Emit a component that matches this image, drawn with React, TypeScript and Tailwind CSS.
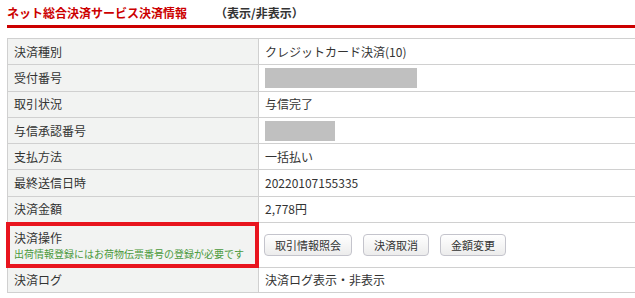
import React from "react";

const rows: { label: string; value?: string; mask?: number }[] = [
  { label: "決済種別", value: "クレジットカード決済(10)" },
  { label: "受付番号", mask: 152 },
  { label: "取引状況", value: "与信完了" },
  { label: "与信承認番号", mask: 70 },
  { label: "支払方法", value: "一括払い" },
  { label: "最終送信日時", value: "20220107155335" },
  { label: "決済金額", value: "2,778円" },
];

function Btn({ children }: { children: React.ReactNode }) {
  return (
    <button className="h-[22px] px-[10px] rounded-[4px] border border-[#c4c4cc] bg-gradient-to-b from-[#ffffff] to-[#ececec] text-[11px] text-[#333] leading-none">
      {children}
    </button>
  );
}

export default function App() {
  const font = { fontFamily: '"Noto Sans CJK JP", "Noto Sans", sans-serif' };
  return (
    <div className="w-[635px] h-[298px] overflow-hidden bg-white text-[#333]" style={font}>
      <div className="pl-[7px] pt-[2px]">
        <div className="h-[21px] flex items-center text-[12px] font-bold">
          <span className="text-[#cc0000]">ネット総合決済サービス決済情報</span>
          <span className="ml-[28px] text-[#333]">（表示/非表示）</span>
        </div>
        <div className="mt-[2px] h-[3px] bg-[#cc0000] w-[700px]" />
        <div className="mt-[10px] w-[700px] border-t border-l border-[#d0d0d0] text-[12px]">
          {rows.map((r) => (
            <div key={r.label} className="flex h-[26.3px] border-b border-[#d0d0d0]">
              <div className="w-[251px] shrink-0 bg-[#f2f3f2] border-r border-[#d0d0d0] pl-[6px] flex items-center">
                {r.label}
              </div>
              <div className="flex-1 flex items-center pl-[6px]">
                {r.mask ? (
                  <div className="h-[20px] bg-[#c0c0c0]" style={{ width: r.mask }} />
                ) : (
                  r.value
                )}
              </div>
            </div>
          ))}
          <div className="flex h-[45px] border-b border-[#d0d0d0]">
            <div className="relative w-[251px] shrink-0 bg-[#f2f3f2] border-r border-[#d0d0d0] pl-[6px] flex flex-col justify-center">
              <div className="leading-[15px]">決済操作</div>
              <div className="mt-[2px] text-[10px] leading-[13px] text-[#4a9a3c]">
                出荷情報登録にはお荷物伝票番号の登録が必要です
              </div>
              <span className="absolute left-[-2px] right-[-1px] top-[-1px] bottom-[-1px] border-[4px] border-[#e8141e]" />
            </div>
            <div className="flex-1 flex items-center pl-[5px] gap-[11px]">
              <Btn>取引情報照会</Btn>
              <Btn>決済取消</Btn>
              <Btn>金額変更</Btn>
            </div>
          </div>
          <div className="flex h-[25px] border-b border-[#d0d0d0]">
            <div className="w-[251px] shrink-0 bg-[#f2f3f2] border-r border-[#d0d0d0] pl-[6px] flex items-center">
              決済ログ
            </div>
            <div className="flex-1 flex items-center pl-[6px]">決済ログ表示・非表示</div>
          </div>
        </div>
      </div>
    </div>
  );
}
